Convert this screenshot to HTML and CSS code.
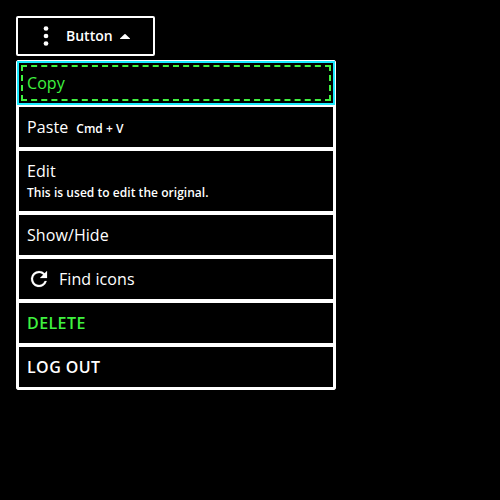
FILE: index.html
```
<!DOCTYPE html>
<html lang="en">
<head>
<meta charset="utf-8">
<title>Menu</title>
<link rel="stylesheet" href="styles.css">
</head>
<body>
<button class="trigger" type="button">
<svg class="more" viewBox="0 0 20 20"><circle cx="10" cy="2.5" r="2.35"/><circle cx="10" cy="10" r="2.35"/><circle cx="10" cy="17.5" r="2.35"/></svg>
<span>Button</span>
<svg class="caret" viewBox="0 0 10 5"><path d="M0 5V4.5L4.4.3Q5-.2 5.6.3L10 4.5V5Z"/></svg>
</button>
<ul class="menu">
<li class="item focused">Copy</li>
<li class="item">Paste<span class="shortcut">Cmd + V</span></li>
<li class="item stacked">Edit<span class="description">This is used to edit the original.</span></li>
<li class="item">Show/Hide</li>
<li class="item"><svg class="refresh" viewBox="0 0 24 24"><path d="M17.65 6.35A7.96 7.96 0 0 0 12 4a8 8 0 1 0 7.73 10h-2.08A6 6 0 1 1 12 6c1.66 0 3.14.69 4.22 1.78L13 11h7V4z"/></svg>Find icons</li>
<li class="item strong danger">DELETE</li>
<li class="item strong">LOG OUT</li>
</ul>
</body>
</html>
```
FILE: styles.css
```
* { box-sizing: border-box; }
body {
  margin: 0;
  padding: 16px;
  background: #000;
  color: #fff;
  font: 16px/24px "Open Sans", sans-serif;
}
svg { display: block; flex: none; fill: currentColor; }
.trigger {
  display: flex;
  align-items: center;
  width: 139px;
  height: 40px;
  padding: 0 0 0 18px;
  border: 2px solid #fff;
  border-radius: 2px;
  background: #000;
  color: #fff;
  font: 600 14px/20px "Open Sans", sans-serif;
}
.more { width: 20px; height: 20px; margin-right: 10px; }
.caret { width: 10px; height: 5px; margin-left: 7px; }
.menu {
  width: 320px;
  margin: 4px 0 0;
  padding: 0;
  border: 1px solid #fff;
  border-radius: 2px;
  list-style: none;
  background: #000;
}
.item {
  display: flex;
  align-items: center;
  height: 44px;
  padding: 0 8px;
  border: 2px solid #fff;
  letter-spacing: 0.08px;
}
.focused {
  position: relative;
  border-color: #1aebff;
  color: #3ff23f;
}
.focused::after {
  content: "";
  position: absolute;
  inset: 2px;
  border: 2px dashed #3ff23f;
}
.stacked { flex-direction: column; align-items: flex-start; justify-content: center; height: 64px; }
.shortcut, .description { font-size: 12px; line-height: 20px; font-weight: 600; letter-spacing: 0.04px; }
.shortcut { margin: 4px 0 0 8px; }
.refresh { width: 24px; height: 24px; margin-right: 8px; stroke: currentColor; stroke-width: 0.2; }
.strong { font-weight: 600; letter-spacing: 0.42px; }
.danger { color: #3ff23f; }
```
